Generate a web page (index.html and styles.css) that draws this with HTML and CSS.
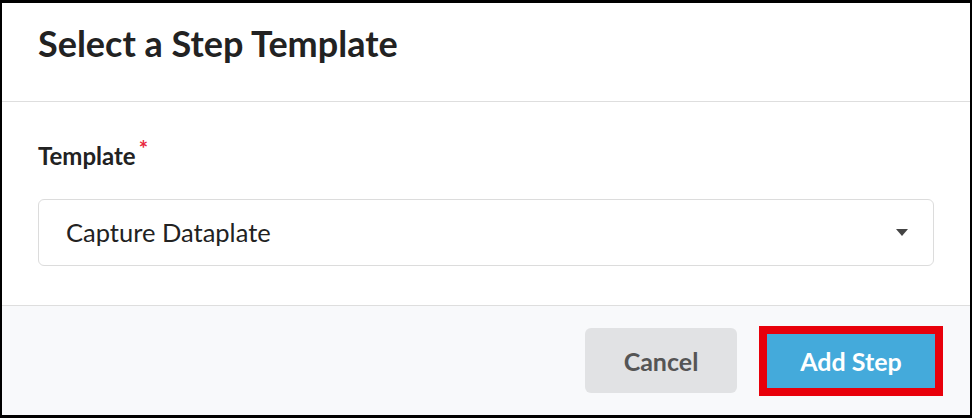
FILE: index.html
```html
<!DOCTYPE html>
<html>
<head>
<meta charset="utf-8">
<link rel="stylesheet" href="styles.css">
</head>
<body>
<div class="dialog">
  <div class="header">
    <h1 class="title">Select a Step Template</h1>
  </div>
  <div class="body">
    <label class="label">Template<span class="req">*</span></label>
    <div class="select">
      <span class="value">Capture Dataplate</span>
      <svg class="caret" width="12" height="7" viewBox="0 0 12 7"><path d="M0 0H12L6 7Z" fill="#444"/></svg>
    </div>
  </div>
  <div class="footer">
    <button class="btn cancel">Cancel</button>
    <button class="btn primary">Add Step</button>
  </div>
</div>
</body>
</html>
```
FILE: styles.css
```css
html, body { margin: 0; padding: 0; }
body { font-family: Lato, "Noto Sans", sans-serif; background: #fff; }
.dialog {
  width: 972px; height: 418px; box-sizing: border-box;
  border-style: solid; border-color: #000; border-width: 3px 2px 3px 2px;
  display: flex; flex-direction: column; background: #fff;
}
.header {
  height: 99px; box-sizing: border-box; border-bottom: 1px solid #dedede;
  padding: 19px 36px 0 36px;
}
.title { margin: 0; font-size: 36px; line-height: 1.2; font-weight: 700; color: #222; }
.body { flex: 1; padding: 40px 36px 0 36px; }
.label { display: block; font-size: 24px; line-height: 1.2; font-weight: 700; color: #222; margin-bottom: 28px; }
.req { color: #e8283c; font-size: 22px; position: relative; top: -8px; margin-left: 3px; }
.select {
  height: 67px; box-sizing: border-box; border: 1px solid #dcdcdc; border-radius: 6px;
  display: flex; align-items: center; justify-content: space-between; padding: 0 25px 0 27px;
}
.value { font-size: 25.5px; line-height: 1.2; color: #222; }
.footer {
  height: 110px; box-sizing: border-box; border-top: 1px solid #dedede; background: #f8f9fb;
  display: flex; align-items: center; justify-content: flex-end; padding: 0 27px 0 0; gap: 22px;
}
.btn { font-family: Lato, sans-serif; font-weight: 700; font-size: 25px; border: none; cursor: pointer; padding: 0; }
.cancel { width: 152px; height: 65px; border-radius: 6px; background: #e1e2e4; color: #555; }
.primary { width: 184px; height: 70px; background: #44aadb; color: #fff; border: 8px solid #e8000b; }
```
